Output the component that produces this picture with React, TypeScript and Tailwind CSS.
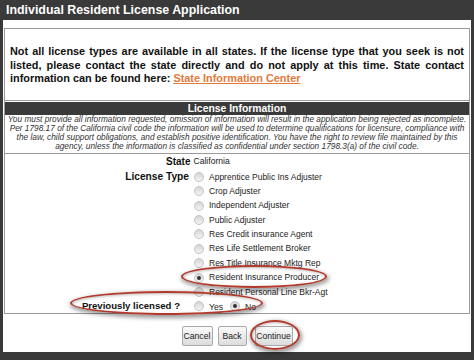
import React from 'react'

const licenseTypes = [
  'Apprentice Public Ins Adjuster',
  'Crop Adjuster',
  'Independent Adjuster',
  'Public Adjuster',
  'Res Credit insurance Agent',
  'Res Life Settlement Broker',
  'Res Title Insurance Mktg Rep',
  'Resident Insurance Producer',
  'Resident Personal Line Bkr-Agt',
]

const Radio: React.FC<{ checked?: boolean }> = ({ checked }) => (
  <span className="w-[10px] h-[10px] shrink-0 rounded-full border border-[#c4c4c4] bg-gradient-to-b from-[#d4d4d4] to-[#f5f5f5] flex items-center justify-center">
    {checked && <span className="w-[4px] h-[4px] rounded-full bg-[#333]" />}
  </span>
)

const Button: React.FC<{ label: string; w: string }> = ({ label, w }) => (
  <button className={`${w} h-[20px] border border-[#a9a9a9] rounded-[2px] bg-gradient-to-b from-[#fafafa] to-[#dcdcdc] text-[8.6px] text-[#222] leading-none whitespace-nowrap`}>
    {label}
  </button>
)

export default function App() {
  return (
    <div className="relative w-[474px] h-[360px] overflow-hidden bg-[#3a3a3a] flex flex-col font-['Liberation_Sans',Arial,sans-serif]">
      {/* title bar */}
      <div className="h-[20px] shrink-0 px-[6px] flex items-center text-white font-bold text-[12.4px]">
        Individual Resident License Application
      </div>

      <div className="mx-[3px] flex-1 bg-white flex flex-col mb-[8px]">
        <div className="mt-[8px] mx-[1px] border border-[#9a9a9a]">
          {/* notice */}
          <div className="px-[5px] pt-[16px] pb-[14px] text-[10.9px] leading-[13.5px] font-bold text-[#111]">
            <div className="text-justify [text-align-last:justify]">
              Not all license types are available in all states. If the license type that you seek is not
            </div>
            <div className="text-justify [text-align-last:justify]">
              listed, please contact the state directly and do not apply at this time. State contact
            </div>
            <div>
              information can be found here:{' '}
              <a href="#" className="text-[#e2793a] underline">State Information Center</a>
            </div>
          </div>

          {/* license information */}
          <div className="border-t border-[#9a9a9a] pt-[1px]">
            <div className="h-[13px] bg-[#3a3a3a] text-white font-bold text-[10.4px] leading-[13px] text-center">
              License Information
            </div>
            <div className="text-[8.3px] leading-[9.3px] italic text-center text-[#333] border-b border-[#9a9a9a] pb-[1px] whitespace-nowrap">
              <div>You must provide all information requested, omission of information will result in the application being rejected as incomplete.</div>
              <div>Per 1798.17 of the California civil code the information will be used to determine qualifications for licensure, compliance with</div>
              <div>the law, child support obligations, and establish positive identification. You have the right to review file maintained by this</div>
              <div>agency, unless the information is classified as confidential under section 1798.3(a) of the civil code.</div>
            </div>

            <div className="h-[15px] pl-[161px] flex items-center gap-[3px]">
              <span className="font-bold text-[10px] text-[#111]">State</span>
              <span className="text-[8.6px] text-[#222]">California</span>
            </div>

            <div className="mt-[1px] flex">
              <div className="w-[184px] shrink-0 text-right font-bold text-[10.2px] leading-[14.4px] text-[#111]">
                License Type
              </div>
              <div className="pl-[5px] flex flex-col">
                {licenseTypes.map((t, i) => (
                  <div key={t} className="h-[14.4px] flex items-center gap-[5px]">
                    <Radio checked={i === 7} />
                    <span className="text-[8.5px] text-[#222]">{t}</span>
                  </div>
                ))}
              </div>
            </div>

            <div className="h-[14px] flex items-center">
              <div className="w-[184px] shrink-0 text-right pr-[9px] font-bold text-[9.6px] text-[#111]">
                Previously licensed ?
              </div>
              <div className="pl-[5px] flex items-center text-[8.6px] text-[#222]">
                <Radio />
                <span className="ml-[5px] mt-[2px]">Yes</span>
                <span className="ml-[7px]"><Radio checked /></span>
                <span className="ml-[5px] mt-[2px]">No</span>
              </div>
            </div>
          </div>
        </div>

        {/* buttons */}
        <div className="mt-[12px] flex justify-center gap-[5px]">
          <Button label="Cancel" w="w-[31px]" />
          <Button label="Back" w="w-[29px]" />
          <span className="ml-[3px] flex"><Button label="Continue" w="w-[38px]" /></span>
        </div>
      </div>

      {/* annotation highlights */}
      <div className="absolute left-[181px] top-[265px] w-[146px] h-[23px] rounded-[50%] border-2 border-[#b23a2c] shadow-[1px_2px_4px_1px_rgba(0,0,0,0.4),inset_1px_1px_3px_rgba(0,0,0,0.25)]" />
      <div className="absolute left-[70px] top-[291px] w-[193px] h-[24px] rounded-[50%] border-2 border-[#b23a2c] shadow-[1px_2px_4px_1px_rgba(0,0,0,0.4),inset_1px_1px_3px_rgba(0,0,0,0.25)]" />
      <div className="absolute left-[250px] top-[320px] w-[50px] h-[30px] rounded-[50%] border-2 border-[#b23a2c] shadow-[1px_2px_4px_1px_rgba(0,0,0,0.4),inset_1px_1px_3px_rgba(0,0,0,0.25)]" />
    </div>
  )
}
